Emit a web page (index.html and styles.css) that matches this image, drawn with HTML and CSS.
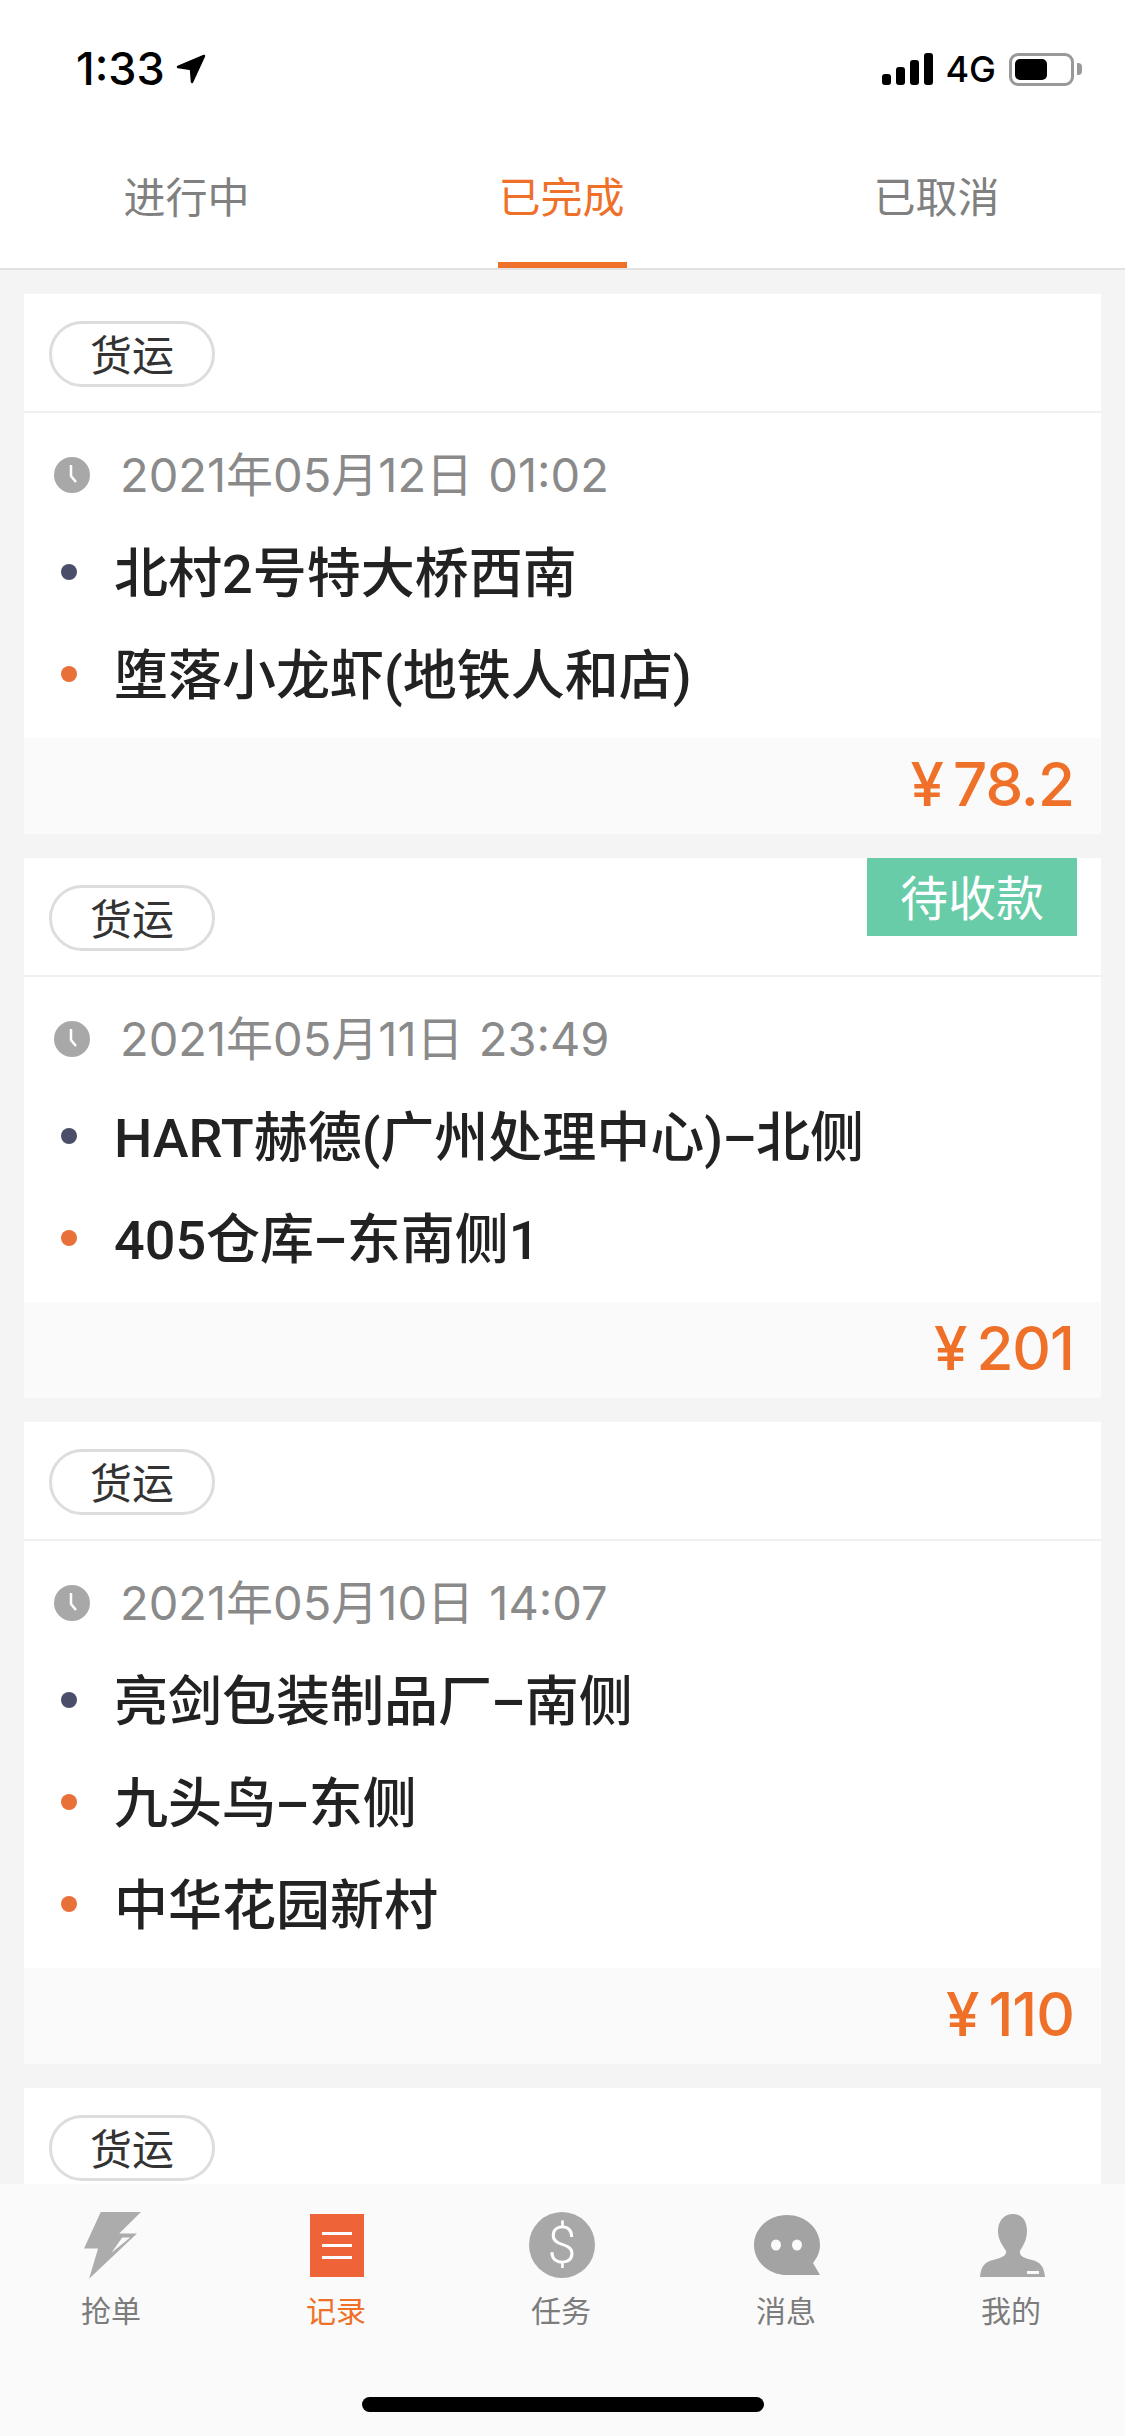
FILE: index.html
```html
<!DOCTYPE html>
<html lang="zh-CN">
<head>
    <meta charset="UTF-8">
    <meta name="viewport" content="width=device-width, initial-scale=1.0">
    <title>记录</title>
    <link rel="stylesheet" href="styles.css">
</head>
<body>
<div class="page">
    <div class="status">
        <div class="status-left">
            <span class="time">1:33</span>
            <svg class="arrow" viewBox="0 0 30 30"><path d="M28 2 L2 13 L15 15 L16 28 Z" fill="#000" stroke="#000" stroke-width="2.5" stroke-linejoin="round"/></svg>
        </div>
        <div class="status-right">
            <div class="signal"><i class="s1"></i><i class="s2"></i><i class="s3"></i><i class="s4"></i></div>
            <span class="net">4G</span>
            <div class="battery"><div class="battery-level"></div></div>
            <div class="battery-nub"></div>
        </div>
    </div>

    <div class="tabs">
        <div class="tab"><span class="tab-label">进行中</span></div>
        <div class="tab active"><span class="tab-label">已完成</span></div>
        <div class="tab"><span class="tab-label">已取消</span></div>
    </div>

    <div class="list">
        <div class="card">
            <div class="card-head"><span class="pill">货运</span></div>
            <div class="card-body">
                <div class="when">
                    <svg class="clock" viewBox="0 0 36 36"><circle cx="18" cy="18" r="18" fill="#a8a8a8"/><path d="M17 8 V19 L22 25" fill="none" stroke="#fff" stroke-width="2.5"/></svg>
                    <span>2021年05月12日 01:02</span>
                </div>
                <div class="stop"><i class="dot start"></i><span>北村2号特大桥西南</span></div>
                <div class="stop"><i class="dot"></i><span>堕落小龙虾(地铁人和店)</span></div>
            </div>
            <div class="card-foot"><span class="price">¥ 78.2</span></div>
        </div>

        <div class="card">
            <div class="badge">待收款</div>
            <div class="card-head"><span class="pill">货运</span></div>
            <div class="card-body">
                <div class="when">
                    <svg class="clock" viewBox="0 0 36 36"><circle cx="18" cy="18" r="18" fill="#a8a8a8"/><path d="M17 8 V19 L22 25" fill="none" stroke="#fff" stroke-width="2.5"/></svg>
                    <span>2021年05月11日 23:49</span>
                </div>
                <div class="stop"><i class="dot start"></i><span>HART赫德(广州处理中心)<b class="dash">–</b>北侧</span></div>
                <div class="stop"><i class="dot"></i><span>405仓库<b class="dash">–</b>东南侧1</span></div>
            </div>
            <div class="card-foot"><span class="price">¥ 201</span></div>
        </div>

        <div class="card">
            <div class="card-head"><span class="pill">货运</span></div>
            <div class="card-body">
                <div class="when">
                    <svg class="clock" viewBox="0 0 36 36"><circle cx="18" cy="18" r="18" fill="#a8a8a8"/><path d="M17 8 V19 L22 25" fill="none" stroke="#fff" stroke-width="2.5"/></svg>
                    <span>2021年05月10日 14:07</span>
                </div>
                <div class="stop"><i class="dot start"></i><span>亮剑包装制品厂<b class="dash">–</b>南侧</span></div>
                <div class="stop"><i class="dot"></i><span>九头鸟<b class="dash">–</b>东侧</span></div>
                <div class="stop"><i class="dot"></i><span>中华花园新村</span></div>
            </div>
            <div class="card-foot"><span class="price">¥ 110</span></div>
        </div>

        <div class="card">
            <div class="card-head"><span class="pill">货运</span></div>
        </div>
    </div>

    <div class="tabbar">
        <div class="nav">
            <div class="nav-item">
                <div class="nav-icon">
                    <svg width="57" height="67" viewBox="250 66 170 200"><path d="M300 66 H420 L355 130 H408 L265 265 L292 175 H250 Z" fill="#acacac"/><path d="M388 142 H364 L332 188 Z" fill="#fafafa"/></svg>
                </div>
                <span>抢单</span>
            </div>
            <div class="nav-item active">
                <div class="nav-icon">
                    <svg width="54" height="63" viewBox="0 0 54 63"><rect width="54" height="63" fill="#ee6337"/><path d="M12 19.5 H42 M12 31.5 H42 M12 43.5 H42" stroke="#fff" stroke-width="3"/></svg>
                </div>
                <span>记录</span>
            </div>
            <div class="nav-item">
                <div class="nav-icon">
                    <div class="coin">$</div>
                </div>
                <span>任务</span>
            </div>
            <div class="nav-item">
                <div class="nav-icon">
                    <svg width="66" height="60" viewBox="0 0 66 60"><path d="M33 0 C51 0 66 13 66 30 C66 37 63 43 59 48 L66 60 H33 C15 60 0 47 0 30 C0 13 15 0 33 0 Z" fill="#a3a3a3"/><ellipse cx="22" cy="30" rx="5" ry="5.5" fill="#fafafa"/><ellipse cx="43" cy="30" rx="5" ry="5.5" fill="#fafafa"/></svg>
                </div>
                <span>消息</span>
            </div>
            <div class="nav-item">
                <div class="nav-icon">
                    <svg width="65" height="63" viewBox="0 0 65 63"><path d="M33 0 C42 0 47 7 47 17 C47 26 43 32 40 37 C39 42 44 44 52 46 C60 48 64 52 65 63 H0 C1 52 5 48 13 46 C21 44 27 42 26 37 C23 32 18 26 18 17 C18 7 24 0 33 0 Z" fill="#a8a8a8"/><rect x="47" y="57" width="12" height="3" fill="#fafafa"/></svg>
                </div>
                <span>我的</span>
            </div>
        </div>
        <div class="home-bar"></div>
    </div>
</div>
</body>
</html>
```

FILE: styles.css
```css
* {
    box-sizing: border-box;
}
body {
    margin: 0;
    font-family: Inter, "Noto Sans CJK SC", sans-serif;
    color: #222;
}
.page {
    width: 1125px;
    height: 2436px;
    display: flex;
    flex-direction: column;
    overflow: hidden;
    background: #f4f4f4;
}

/* status bar */
.status {
    height: 130px;
    flex: none;
    background: #fff;
    padding: 52px 43px 0 76px;
    display: flex;
    justify-content: space-between;
    align-items: flex-start;
}
.status-left {
    display: flex;
    align-items: center;
    gap: 11px;
    height: 34px;
}
.time {
    font-size: 45px;
    font-weight: 500;
    line-height: 34px;
    color: #000;
}
.arrow {
    width: 30px;
    height: 30px;
}
.status-right {
    display: flex;
    align-items: center;
    height: 34px;
}
.signal {
    display: flex;
    align-items: flex-end;
    gap: 5px;
    height: 32px;
}
.signal i {
    display: block;
    width: 9px;
    background: #000;
    border-radius: 3px;
}
.s1 { height: 11px; }
.s2 { height: 18px; }
.s3 { height: 25px; }
.s4 { height: 32px; }
.net {
    margin-left: 12px;
    font-size: 36px;
    font-weight: 500;
    line-height: 34px;
    color: #000;
}
.battery {
    margin-left: 13px;
    width: 65px;
    height: 33px;
    border: 3px solid #999;
    border-radius: 9px;
    padding: 3px;
}
.battery-level {
    width: 32px;
    height: 21px;
    background: #000;
    border-radius: 5px;
}
.battery-nub {
    margin-left: 3px;
    width: 5px;
    height: 12px;
    background: #999;
    border-radius: 0 4px 4px 0;
}

/* tabs */
.tabs {
    height: 140px;
    flex: none;
    display: flex;
    background: #fff;
    border-bottom: 2px solid #e2e2e2;
}
.tab {
    flex: 1;
    display: flex;
    justify-content: center;
    font-size: 42px;
    color: #808080;
}
.tab-label {
    display: flex;
    align-items: center;
    padding: 0 2px 3px 0;
    border-bottom: 6px solid transparent;
}
.tab.active .tab-label {
    color: #ef7029;
    border-bottom-color: #ef7029;
}

/* order list */
.list {
    flex: 1;
    min-height: 0;
    overflow: hidden;
    padding: 24px;
    display: flex;
    flex-direction: column;
    gap: 24px;
}
.card {
    position: relative;
    flex: none;
    background: #fff;
}
.card-head {
    padding: 27px 25px 24px;
    border-bottom: 2px solid #f0f0f0;
    height: 119px;
}
.pill {
    display: flex;
    align-items: center;
    justify-content: center;
    width: 166px;
    height: 66px;
    border: 3px solid #ddd;
    border-radius: 33px;
    padding-bottom: 3px;
    font-size: 42px;
    color: #333;
}
.badge {
    position: absolute;
    top: 0;
    right: 24px;
    width: 210px;
    height: 78px;
    padding-bottom: 5px;
    background: #68cca8;
    color: #fff;
    font-size: 48px;
    display: flex;
    align-items: center;
    justify-content: center;
}
.card-body {
    padding: 16px 0 13px;
}
.when {
    height: 92px;
    display: flex;
    align-items: center;
    padding-left: 30px;
    font-size: 47px;
    word-spacing: 2px;
    color: #8a8a8a;
}
.when span {
    margin-bottom: 8px;
}
.clock {
    width: 36px;
    height: 36px;
    margin-right: 30px;
}
.stop {
    height: 102px;
    display: flex;
    align-items: center;
    padding-left: 37px;
    font-family: Roboto, "Noto Sans CJK SC", sans-serif;
    font-size: 54px;
    font-weight: 500;
    color: #222;
}
.stop span {
    margin-bottom: 6px;
}
.dash {
    font-weight: 500;
    margin: 0 -1px;
}
.dot {
    width: 16px;
    height: 16px;
    border-radius: 50%;
    background: #e8713a;
    margin-right: 37px;
}
.dot.start {
    background: #4a4e69;
}
.card-foot {
    height: 96px;
    background: #fafafa;
    display: flex;
    align-items: center;
    justify-content: flex-end;
    padding-right: 27px;
}
.price {
    font-size: 60px;
    font-weight: 500;
    letter-spacing: -1px;
    word-spacing: -5px;
    margin-bottom: 5px;
    color: #ef7029;
}

/* bottom nav */
.tabbar {
    height: 252px;
    flex: none;
    background: #fafafa;
}
.nav {
    display: flex;
    width: 1125px;
    margin-left: -1.5px;
    padding-top: 26px;
}
.nav-item {
    flex: 1;
    display: flex;
    flex-direction: column;
    align-items: center;
    font-size: 30px;
    color: #7c7c7c;
}
.nav-item.active {
    color: #ef7029;
}
.nav-icon {
    height: 70px;
    margin: 0 0 7px 2px;
    display: flex;
    align-items: center;
    justify-content: center;
}
.coin {
    width: 66px;
    height: 66px;
    border-radius: 50%;
    background: #a8a8a8;
    color: #fff;
    font-family: Roboto, sans-serif;
    font-weight: 300;
    font-size: 52px;
    display: flex;
    align-items: center;
    justify-content: center;
}
.home-bar {
    width: 402px;
    height: 15px;
    margin: 66px auto 0;
    background: #000;
    border-radius: 8px;
}
```
